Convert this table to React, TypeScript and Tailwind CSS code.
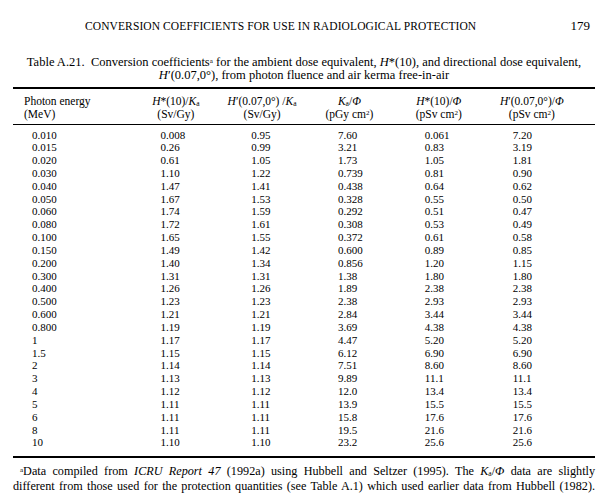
const rows = [
  ["0.010", "0.008", "0.95", "7.60", "0.061", "7.20"],
  ["0.015", "0.26", "0.99", "3.21", "0.83", "3.19"],
  ["0.020", "0.61", "1.05", "1.73", "1.05", "1.81"],
  ["0.030", "1.10", "1.22", "0.739", "0.81", "0.90"],
  ["0.040", "1.47", "1.41", "0.438", "0.64", "0.62"],
  ["0.050", "1.67", "1.53", "0.328", "0.55", "0.50"],
  ["0.060", "1.74", "1.59", "0.292", "0.51", "0.47"],
  ["0.080", "1.72", "1.61", "0.308", "0.53", "0.49"],
  ["0.100", "1.65", "1.55", "0.372", "0.61", "0.58"],
  ["0.150", "1.49", "1.42", "0.600", "0.89", "0.85"],
  ["0.200", "1.40", "1.34", "0.856", "1.20", "1.15"],
  ["0.300", "1.31", "1.31", "1.38", "1.80", "1.80"],
  ["0.400", "1.26", "1.26", "1.89", "2.38", "2.38"],
  ["0.500", "1.23", "1.23", "2.38", "2.93", "2.93"],
  ["0.600", "1.21", "1.21", "2.84", "3.44", "3.44"],
  ["0.800", "1.19", "1.19", "3.69", "4.38", "4.38"],
  ["1", "1.17", "1.17", "4.47", "5.20", "5.20"],
  ["1.5", "1.15", "1.15", "6.12", "6.90", "6.90"],
  ["2", "1.14", "1.14", "7.51", "8.60", "8.60"],
  ["3", "1.13", "1.13", "9.89", "11.1", "11.1"],
  ["4", "1.12", "1.12", "12.0", "13.4", "13.4"],
  ["5", "1.11", "1.11", "13.9", "15.5", "15.5"],
  ["6", "1.11", "1.11", "15.8", "17.6", "17.6"],
  ["8", "1.11", "1.11", "19.5", "21.6", "21.6"],
  ["10", "1.10", "1.10", "23.2", "25.6", "25.6"],
];

// left padding of the figures in each column
const cellPad = ["pl-[19px]", "pl-[23px]", "pl-[37px]", "pl-[32px]", "pl-[32px]", "pl-[28px]"];

const Ka = () => (
  <>
    <i>K</i>
    <span className="relative top-[1px] text-[7.5px] leading-none not-italic">a</span>
  </>
);

const Hstar = () => (
  <>
    <i>H</i>*(10)
  </>
);

const Hprime = () => (
  <>
    <i>H</i>′(0.07,0°)
  </>
);

const Sup = ({ children }: { children: string }) => (
  <span className="relative top-[-3px] text-[7px] leading-none">{children}</span>
);

export default function App() {
  return (
    <div className="h-[502px] w-[608px] bg-white px-[13px] pt-[19px] text-black [font-family:'Liberation_Serif',serif]">
      <header className="flex items-baseline justify-between pl-[72px] pr-[5px]">
        <span className="text-[11.5px] leading-[14px] tracking-[0.1px]">
          CONVERSION COEFFICIENTS FOR USE IN RADIOLOGICAL PROTECTION
        </span>
        <span className="text-[13px] leading-[14px]">179</span>
      </header>

      <p className="mt-[23px] text-center text-[12.5px] leading-[12.5px]">
        <span className="block">
          Table A.21.&nbsp; Conversion coefficients
          <Sup>a</Sup> for the ambient dose equivalent, <Hstar />, and directional dose equivalent,
        </span>
        <span className="block">
          <Hprime />, from photon fluence and air kerma free-in-air
        </span>
      </p>

      <div className="mt-[6px] h-[2px] bg-black" />

      <table className="w-full table-fixed border-collapse text-[11px]">
        <colgroup>
          <col className="w-[122px]" />
          <col className="w-[75px]" />
          <col className="w-[90px]" />
          <col className="w-[85px]" />
          <col className="w-[90px]" />
          <col className="w-[108px]" />
        </colgroup>
        <thead>
          <tr className="border-b border-black align-top text-[11.5px] leading-[12.5px]">
            <th className="pb-[4px] pl-[11px] pt-[6px] text-left font-normal">
              Photon energy
              <br />
              (MeV)
            </th>
            <th className="pb-[4px] pt-[6px] text-center font-normal">
              <Hstar />/<Ka />
              <br />
              (Sv/Gy)
            </th>
            <th className="pb-[4px] pl-[4px] pt-[6px] text-center font-normal">
              <Hprime /> /<Ka />
              <br />
              (Sv/Gy)
            </th>
            <th className="pb-[4px] pt-[6px] text-center font-normal">
              <Ka />/<i>Φ</i>
              <br />
              (pGy cm<Sup>2</Sup>)
            </th>
            <th className="pb-[4px] pt-[6px] text-center font-normal">
              <Hstar />/<i>Φ</i>
              <br />
              (pSv cm<Sup>2</Sup>)
            </th>
            <th className="pb-[4px] pr-[16px] pt-[6px] text-center font-normal">
              <Hprime />/<i>Φ</i>
              <br />
              (pSv cm<Sup>2</Sup>)
            </th>
          </tr>
        </thead>
        <tbody className="leading-[12.83px]">
          <tr className="h-[4px]">
            <td colSpan={6} />
          </tr>
          {rows.map((row) => (
            <tr key={row[0]}>
              {row.map((value, i) => (
                <td key={i} className={`p-0 ${cellPad[i]}`}>
                  {value}
                </td>
              ))}
            </tr>
          ))}
          <tr className="h-[7px]">
            <td colSpan={6} />
          </tr>
        </tbody>
      </table>

      <div className="h-[2px] bg-black" />

      <div className="mt-[6px] text-[12.2px] leading-[14.5px]">
        <p className="pl-[7px] text-justify [text-align-last:justify]">
          <Sup>a</Sup>Data compiled from <i>ICRU Report 47</i> (1992a) using Hubbell and Seltzer (1995). The <Ka />/<i>Φ</i> data are slightly
        </p>
        <p className="text-justify [text-align-last:justify]">
          different from those used for the protection quantities (see Table A.1) which used earlier data from Hubbell (1982).
        </p>
      </div>
    </div>
  );
}
